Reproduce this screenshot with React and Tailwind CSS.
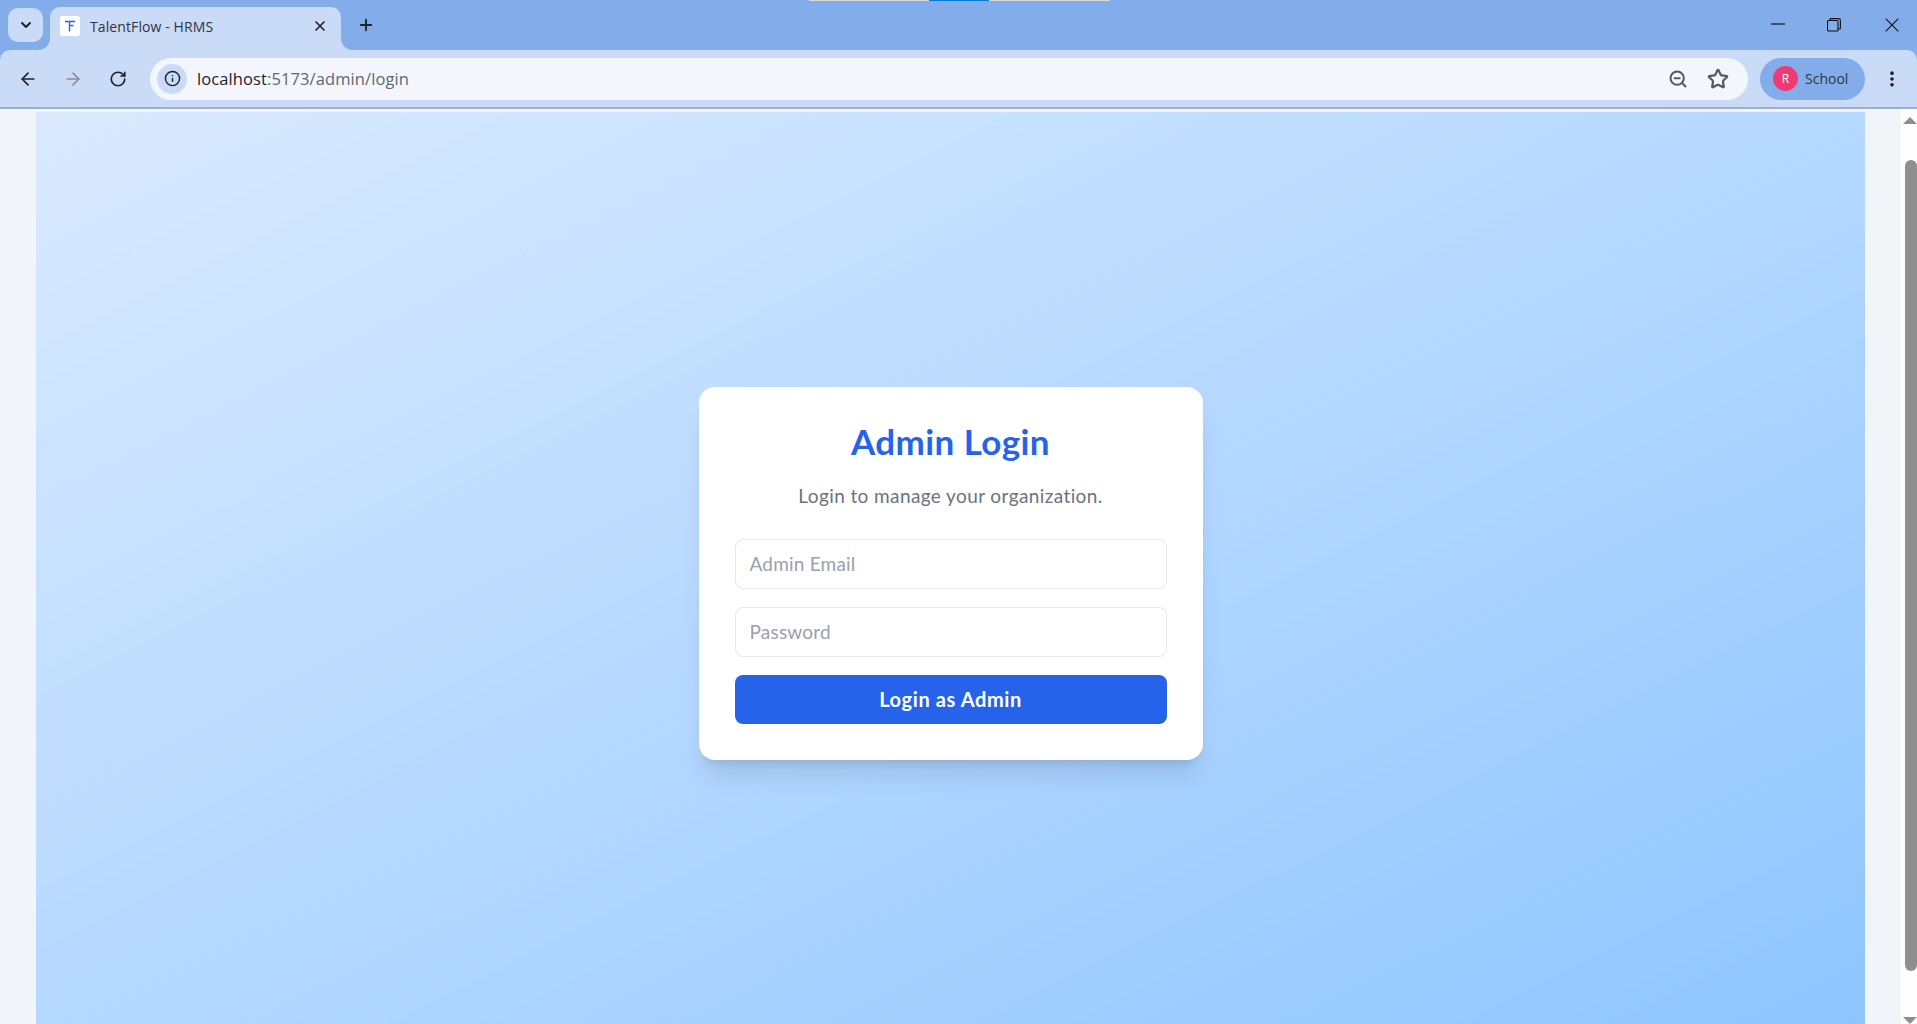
import React from "react";
import { ArrowLeft, ArrowRight, ChevronDown, Info, MoreVertical, Plus, RotateCw, Star, X, ZoomOut } from "lucide-react";

const uiFont = "font-['Open_Sans',sans-serif]";

const TabCorner = ({ side }) => (
  <svg width="12" height="12" viewBox="0 0 12 12" className="self-end shrink-0">
    <path d={side === "left" ? "M12 0V12H0C7 12 12 7 12 0Z" : "M0 0V12H12C5 12 0 7 0 0Z"} fill="#c9dbf6" />
  </svg>
);

const Tab = () => (
  <div className="-ml-[5px] flex h-full items-end">
    <TabCorner side="left" />
    <div className={`${uiFont} flex h-[43px] w-[291px] items-center rounded-t-[10px] bg-[#c9dbf6] pb-[5px] pl-[10px] pr-[13px]`}>
      <div className="flex h-5 w-5 items-center justify-center rounded-[3px] bg-white text-[#2563eb]">
        <svg width="14" height="14" viewBox="0 0 14 14" fill="none" stroke="currentColor" strokeWidth="1.4">
          <path d="M2 2.5H12M6.5 2.5V12.5M6.5 6.5H10.5" />
        </svg>
      </div>
      <span className="ml-[10px] flex-1 text-[14px] tracking-[0.1px] text-[#30353d]">TalentFlow - HRMS</span>
      <X size={16} strokeWidth={2.5} className="text-[#1f2329]" />
    </div>
    <TabCorner side="right" />
  </div>
);

const TitleBar = () => (
  <div className="flex h-[50px] items-center bg-[#83adea]">
    <div className="mb-[8px] ml-2 flex h-[34px] w-[35px] items-center justify-center self-end rounded-[10px] bg-[#c9dbf6]">
      <ChevronDown size={16} strokeWidth={3} className="text-[#1f2329]" />
    </div>
    <Tab />
    <Plus size={18} strokeWidth={2.5} className="ml-[4px] text-[#1f2329]" />
    <div className="flex-1" />
    <svg width="14" height="2" viewBox="0 0 14 2" className="mb-[2px]">
      <path d="M0 1H14" stroke="#111" strokeWidth="1.2" />
    </svg>
    <svg width="14" height="14" viewBox="0 0 14 14" fill="none" stroke="#111" strokeWidth="1.1" className="ml-[42px]">
      <rect x="0.5" y="2.5" width="10.5" height="10.5" rx="1" />
      <path d="M3 2.5V1.5C3 1 3.3 .6 4 .6H11.5C12.6 .6 13.4 1.4 13.4 2.5V10C13.4 10.7 13 11 12.5 11H11" />
    </svg>
    <svg width="14" height="14" viewBox="0 0 14 14" fill="none" stroke="#111" strokeWidth="1.1" className="ml-[44px] mr-[18px]">
      <path d="M.7 .7L13.3 13.3M13.3 .7L.7 13.3" />
    </svg>
  </div>
);

const Toolbar = () => (
  <div className={`${uiFont} flex h-[57px] items-center rounded-t-[10px] bg-[#c9dbf6]`}>
    <ArrowLeft size={20} strokeWidth={2} className="ml-[18px] text-[#1f2329]" />
    <ArrowRight size={20} strokeWidth={2} className="ml-[25px] text-[#878f9c]" />
    <RotateCw size={18} strokeWidth={2.2} className="ml-[26px] text-[#1f2329]" />
    <div className="ml-[23px] flex h-[42px] w-[1598px] items-center rounded-full bg-[#f3f7fd] pl-[7px] pr-[19px]">
      <div className="flex h-[30px] w-[30px] items-center justify-center rounded-full bg-[#c9dbf6]">
        <Info size={17} strokeWidth={2} className="text-[#1f2329]" />
      </div>
      <span className="ml-[10px] mt-[2px] flex-1 text-[16.5px] tracking-[0.1px] text-[#1f2329]">
        localhost<span className="text-[#5f6672]">:5173/admin/login</span>
      </span>
      <ZoomOut size={20} strokeWidth={2.4} className="text-[#55595f]" />
      <Star size={22} strokeWidth={2.4} className="ml-[19px] text-[#55595f]" />
    </div>
    <div className="ml-[12px] flex h-[42px] w-[105px] items-center rounded-full bg-[#83adea] pl-[13px]">
      <div className="flex h-[25px] w-[25px] items-center justify-center rounded-full bg-[#ee3a75] text-[12px] text-white">R</div>
      <span className="ml-[7px] text-[14px] text-[#30353d]">School</span>
    </div>
    <MoreVertical size={20} strokeWidth={2.4} className="ml-[17px] text-[#1f2329]" />
  </div>
);

const Field = ({ type, placeholder }) => (
  <input
    type={type}
    placeholder={placeholder}
    className="h-[50px] w-full rounded-lg border border-gray-200 bg-white pb-[2px] pl-[14px] pr-[13px] font-['Lato',sans-serif] text-[19px] tracking-[0.2px] text-gray-700 outline-none placeholder:text-gray-400"
  />
);

const LoginCard = () => (
  <div className="flex h-[373px] w-[504px] flex-col rounded-2xl bg-white px-9 pt-[32px] font-['Lato',sans-serif] shadow-xl">
    <h1 className="text-center text-[35px] font-bold leading-[44px] tracking-[0.4px] text-[#2563eb]">Admin Login</h1>
    <p className="mt-[19px] text-center text-[19px] leading-[28px] tracking-[0.4px] text-gray-500">Login to manage your organization.</p>
    <form className="mt-[29px] flex flex-col gap-[18px]">
      <Field type="email" placeholder="Admin Email" />
      <Field type="password" placeholder="Password" />
      <button type="button" className="h-[49px] w-full rounded-lg bg-[#2563eb] pb-[2px] text-[20px] font-bold tracking-[0.6px] text-white">
        Login as Admin
      </button>
    </form>
  </div>
);

const Scrollbar = () => (
  <div className="flex w-[16px] shrink-0 flex-col items-end bg-[#fdfdfd]">
    <div className="mt-[8px] h-0 w-0 border-x-[7px] border-b-[7px] border-x-transparent border-b-[#8f8f8f]" />
    <div className="mt-[36px] h-[813px] w-[12px] rounded-t-[6px] rounded-b-[6px] bg-[#8f8f8f]" />
    <div className="mt-[46px] h-0 w-0 border-x-[7px] border-t-[7px] border-x-transparent border-t-[#8f8f8f]" />
  </div>
);

export default function App() {
  return (
    <div className="relative flex h-screen flex-col overflow-hidden bg-[#83adea]">
      {/* capture tool bar across the top edge */}
      <div className="absolute left-[809px] top-0 flex h-px w-[301px]">
        <div className="w-[120px] bg-[#d9d9d9]" />
        <div className="w-[60px] bg-[#0078d4]" />
        <div className="flex-1 bg-[#d9d9d9]" />
      </div>
      <TitleBar />
      <Toolbar />
      <div className="h-[2px] bg-[#a0afc8]" />
      <div className="flex min-h-0 flex-1 bg-[#f1f5f9]">
        <div className="mt-[3px] flex min-w-0 flex-1 pl-[36px] pr-[36px]">
          <div className="flex flex-1 justify-center bg-gradient-to-br from-blue-100 to-blue-300 pt-[275px]">
            <LoginCard />
          </div>
        </div>
        <Scrollbar />
      </div>
    </div>
  );
}
